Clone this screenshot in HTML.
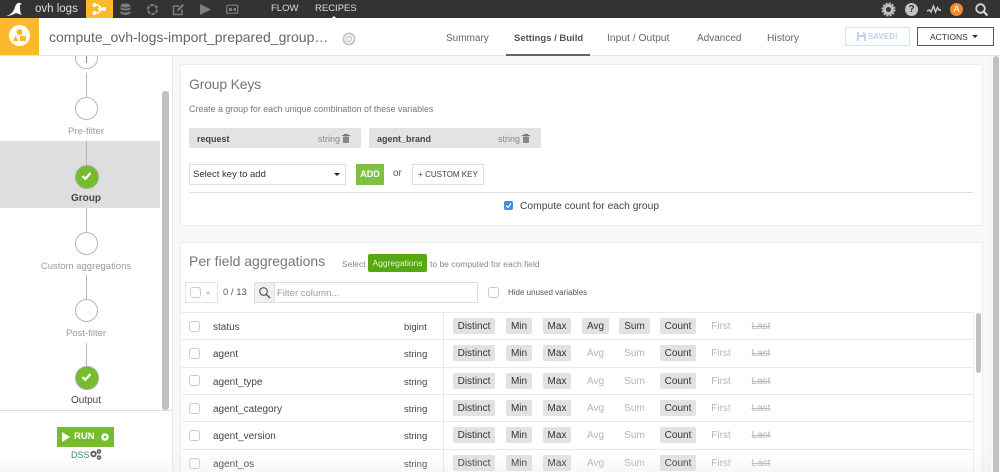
<!DOCTYPE html>
<html style="width:1000px;height:472px;overflow:hidden"><head><meta charset="utf-8">
<style>
html,body{margin:0;padding:0}
body{width:1000px;height:472px;overflow:hidden;position:relative;background:#f8f8f8;font-family:"Liberation Sans",sans-serif;color:#444}
.a{position:absolute;white-space:nowrap}
.t{position:absolute;white-space:nowrap;line-height:14px}
.circ{position:absolute;left:75px;width:21px;height:21px;border:1px solid #b5b5b5;border-radius:50%;background:#fff}
.ok{position:absolute;left:75px;width:22px;height:22px;border-radius:50%;background:#76bd2d;border:0.5px solid #aaa}
.vl{position:absolute;left:86px;width:1px;background:#b5b5b5}
.lab{position:absolute;left:0;width:172px;text-align:center;font-size:9.500px;color:#9a9a9a;line-height:12px}
.b{position:absolute;height:16px;line-height:17px;font-size:10px;background:#e2e2e2;border-radius:2px;text-align:center;color:#333}
.off{background:none;color:#b5b5b5}
.strike{text-decoration:line-through}
.cb{position:absolute;width:9px;height:9px;border:1px solid #ccc;border-radius:3px;background:#fff}
.hl{position:absolute;height:1px;background:#e9e9e9}
</style></head><body>

<!-- top bar -->
<div class="a" style="left:0;top:0;width:1000px;height:18px;background:#333"></div>
<svg class="a" style="left:5px;top:1px" width="20" height="16" viewBox="0 0 20 16"><path d="M1 15 C6 14 9 10 10 6 C11 3 13 1 15 2 L17 3 L15 4 C15 9 15 12 17 14 L11 12 C8 14 4 15 1 15Z" fill="#fff"/></svg>
<div class="t" style="left:35px;top:2px;font-size:11.500px;color:#ddd">ovh logs</div>
<div class="a" style="left:86px;top:0;width:27px;height:18px;background:#fdb92d"></div>
<svg class="a" style="left:92px;top:2px" width="15" height="14" viewBox="0 0 15 14"><path d="M2.500 3 H6 L10 7 L6 11 H2.500" fill="none" stroke="#fff" stroke-width="1.500"/><path d="M6 7H12" stroke="#fff" stroke-width="1.500"/><circle cx="2.500" cy="3" r="2" fill="#fff"/><circle cx="2.500" cy="11" r="2" fill="#fff"/><circle cx="12" cy="7" r="2" fill="#fff"/></svg>
<svg class="a" style="left:119px;top:3px" width="13" height="13" viewBox="0 0 13 13" fill="#7d7d7d"><ellipse cx="6.500" cy="2.500" rx="5" ry="2"/><path d="M1.500 4 C3 6 10 6 11.500 4 V6 C10 8 3 8 1.500 6Z"/><path d="M1.500 8 C3 10 10 10 11.500 8 V10 C10 12.500 3 12.500 1.500 10Z"/></svg>
<svg class="a" style="left:146px;top:3px" width="13" height="13" viewBox="0 0 13 13"><circle cx="6.500" cy="6.500" r="4.500" fill="none" stroke="#7d7d7d" stroke-width="2" stroke-dasharray="3.500 1.200"/></svg>
<svg class="a" style="left:172px;top:3px" width="13" height="13" viewBox="0 0 13 13"><path d="M10 6.500V11.500H1.500V3H7" fill="none" stroke="#7d7d7d" stroke-width="1.500"/><path d="M5 8.500 L5.500 6 L10.500 1 L12 2.500 L7 7.500Z" fill="#7d7d7d"/></svg>
<svg class="a" style="left:199px;top:3px" width="13" height="13" viewBox="0 0 13 13"><path d="M1 1 L12 6.500 L1 12Z" fill="#7d7d7d"/></svg>
<svg class="a" style="left:226px;top:4px" width="13" height="11" viewBox="0 0 13 11"><rect x=".7" y="1.200" width="11" height="8" rx="1" fill="none" stroke="#7d7d7d" stroke-width="1.200"/><rect x="3" y="4" width="3" height="3" fill="#7d7d7d"/><rect x="7.500" y="4" width="2.500" height="3" fill="#7d7d7d"/></svg>
<div class="t" style="left:271px;top:2px;font-size:9.500px;color:#ddd">FLOW</div>
<div class="t" style="left:315px;top:2px;font-size:9.500px;color:#ddd">RECIPES</div>
<div class="a" style="left:331px;top:16px;width:0;height:0;border-left:3px solid transparent;border-right:3px solid transparent;border-bottom:3px solid #fff"></div>

<svg class="a" style="left:881px;top:2px" width="15" height="15" viewBox="0 0 15 15"><circle cx="7.500" cy="7.500" r="4" fill="none" stroke="#bdbdbd" stroke-width="3"/><circle cx="7.500" cy="7.500" r="6" fill="none" stroke="#bdbdbd" stroke-width="2" stroke-dasharray="2 1.140"/></svg>
<div class="a" style="left:905px;top:3px;width:13px;height:13px;border-radius:50%;background:#c4c4c4;color:#333;font:bold 10px/13px 'Liberation Sans',sans-serif;text-align:center">?</div>
<svg class="a" style="left:926px;top:4px" width="16" height="11" viewBox="0 0 16 11"><path d="M1 7 L3.500 6 L5 8 L7.500 2 L9.500 8 L11.500 3.500 L13 6 L15 6" fill="none" stroke="#d0d0d0" stroke-width="1.400"/></svg>
<div class="a" style="left:950px;top:3px;width:13px;height:13px;border-radius:50%;background:#f5882a;color:#fff;font-size:9.500px;line-height:13px;text-align:center">A</div>
<svg class="a" style="left:974px;top:2px" width="15" height="15" viewBox="0 0 15 15"><circle cx="6.500" cy="6.500" r="4.300" fill="none" stroke="#d8d8d8" stroke-width="1.800"/><path d="M10 10 L13.500 13.500" stroke="#d8d8d8" stroke-width="2.200"/></svg>

<!-- header -->
<div class="a" style="left:0;top:18px;width:1000px;height:37px;background:#fff;border-bottom:1px solid #e4e4e4"></div>
<div class="a" style="left:0;top:18px;width:39px;height:37px;background:#fdb92d"></div>
<svg class="a" style="left:9px;top:25px" width="21" height="21" viewBox="0 0 21 21"><circle cx="10.500" cy="10.500" r="10.500" fill="#fff"/><circle cx="10.500" cy="7" r="3" fill="#fdb92d"/><path d="M3.500 16 L6.500 10.500 L9.500 16Z" fill="#fdb92d"/><rect x="11" y="11" width="6" height="5" fill="#fdb92d"/></svg>
<div class="t" style="left:49px;top:29px;font-size:14px;line-height:16px;color:#666">compute_ovh-logs-import_prepared_group…</div>
<svg class="a" style="left:342px;top:32px" width="14" height="14" viewBox="0 0 14 14"><circle cx="7" cy="7" r="5.500" fill="none" stroke="#c8c8c8" stroke-width="2"/><circle cx="7" cy="7" r="2.500" fill="none" stroke="#c8c8c8" stroke-width="1.500"/></svg>

<div class="t" style="left:446px;top:32px;font-size:10px;color:#666">Summary</div>
<div class="t" style="left:514px;top:32px;font-size:9.500px;color:#555;font-weight:bold">Settings / Build</div>
<div class="t" style="left:607px;top:32px;font-size:10.300px;color:#666">Input / Output</div>
<div class="t" style="left:697px;top:32px;font-size:10px;color:#666">Advanced</div>
<div class="t" style="left:767px;top:32px;font-size:10.300px;color:#666">History</div>
<div class="a" style="left:506px;top:54px;width:84px;height:2px;background:#666"></div>

<div class="a" style="left:845px;top:27px;width:63px;height:17px;border:1px solid #cfe3f7;background:#fff"></div>
<svg class="a" style="left:857px;top:32px" width="9" height="9" viewBox="0 0 9 9"><path d="M0 0H7L9 2V9H0Z" fill="#bcd6ef"/><rect x="2" y="0" width="4" height="3" fill="#fff"/><rect x="2" y="5" width="5" height="4" fill="#fff"/></svg>
<div class="t" style="left:868px;top:30px;font-size:8px;color:#b8d4ef;font-weight:bold">SAVED!</div>
<div class="a" style="left:917px;top:27px;width:75px;height:17px;border:1px solid #555;background:#fff"></div>
<div class="t" style="left:930px;top:30px;font-size:8.500px;color:#333">ACTIONS</div>
<div class="a" style="left:972px;top:35px;width:0;height:0;border-left:3.500px solid transparent;border-right:3.500px solid transparent;border-top:3.500px solid #333"></div>

<!-- sidebar -->
<div class="a" style="left:0;top:56px;width:172px;height:416px;background:#fff;border-right:1px solid #e8e8e8"></div>
<div class="a" style="left:0;top:141px;width:160px;height:67px;background:#dedede"></div>
<div class="a" style="left:162px;top:91px;width:7px;height:319px;background:#c1c1c1;border-radius:3px"></div>
<div class="a" style="left:0;top:410px;width:172px;height:1px;background:#ddd"></div>

<div class="vl" style="top:73px;height:24px"></div>
<div class="a" style="left:75px;top:56px;width:21px;height:12px;border:1px solid #b5b5b5;border-top:0;border-radius:0 0 11px 11px;background:#fff"></div>
<div class="a" style="left:86px;top:56px;width:1px;height:7px;background:#888"></div>
<div class="circ" style="top:97px"></div>
<div class="lab" style="top:126px">Pre-filter</div>
<div class="vl" style="top:141px;height:24px"></div>
<div class="ok" style="top:165px"></div>
<svg class="a" style="left:81px;top:171px" width="11" height="10" viewBox="0 0 11 10"><path d="M1.500 5 L4.300 7.800 L9.500 2" fill="none" stroke="#fff" stroke-width="2.200"/></svg>
<div class="lab" style="top:193px;color:#444;font-weight:bold;font-size:10px">Group</div>
<div class="vl" style="top:208px;height:24px"></div>
<div class="circ" style="top:232px"></div>
<div class="lab" style="top:261px">Custom aggregations</div>
<div class="vl" style="top:275px;height:24px"></div>
<div class="circ" style="top:299px"></div>
<div class="lab" style="top:328px">Post-filter</div>
<div class="vl" style="top:343px;height:23px"></div>
<div class="ok" style="top:366px"></div>
<svg class="a" style="left:81px;top:372px" width="11" height="10" viewBox="0 0 11 10"><path d="M1.500 5 L4.300 7.800 L9.500 2" fill="none" stroke="#fff" stroke-width="2.200"/></svg>
<div class="lab" style="top:395px;color:#444;font-size:10px">Output</div>

<div class="a" style="left:57px;top:427px;width:57px;height:20px;background:#76bd2d"></div>
<svg class="a" style="left:62px;top:432px" width="9" height="10" viewBox="0 0 9 10"><path d="M0 0L8 5L0 10Z" fill="#fff"/></svg>
<div class="t" style="left:74px;top:430px;font-size:9.500px;color:#fff;font-weight:bold">RUN</div>
<svg class="a" style="left:101px;top:433px" width="8" height="8" viewBox="0 0 8 8"><circle cx="4" cy="4" r="2.500" fill="none" stroke="#fff" stroke-width="2.500"/></svg>
<div class="t" style="left:71px;top:448px;font-size:9px;color:#2e8b57">DSS</div>
<svg class="a" style="left:90px;top:449px" width="12" height="11" viewBox="0 0 12 11"><circle cx="3.500" cy="5" r="2.300" fill="none" stroke="#555" stroke-width="1.800"/><circle cx="9" cy="2.500" r="1.500" fill="none" stroke="#555" stroke-width="1.500"/><circle cx="9" cy="8.500" r="1.500" fill="none" stroke="#555" stroke-width="1.500"/></svg>

<!-- Group keys card -->
<div class="a" style="left:180px;top:64px;width:801px;height:160px;background:#fff;border:1px solid #ececec"></div>
<div class="t" style="left:189px;top:76px;font-size:14px;line-height:16px;color:#777;letter-spacing:-.2px">Group Keys</div>
<div class="t" style="left:189px;top:102px;font-size:8.850px;color:#777">Create a group for each unique combination of these variables</div>

<div class="a" style="left:189px;top:128px;width:172px;height:20px;background:#e3e3e3;border-radius:1px"></div>
<div class="t" style="left:197px;top:132px;font-size:9px;font-weight:bold;color:#444">request</div>
<div class="t" style="left:318px;top:132px;font-size:9px;color:#888">string</div>
<div class="a" style="left:369px;top:128px;width:172px;height:20px;background:#e3e3e3;border-radius:1px"></div>
<div class="t" style="left:377px;top:132px;font-size:9px;font-weight:bold;color:#444">agent_brand</div>
<div class="t" style="left:498px;top:132px;font-size:9px;color:#888">string</div>
<svg class="a" style="left:342px;top:134px" width="8" height="9" viewBox="0 0 8 9"><path d="M0 1.500H8M2.500 1.500V.5H5.500V1.500" stroke="#777" fill="none"/><rect x="1" y="2.500" width="6" height="6.500" fill="#888"/></svg>
<svg class="a" style="left:522px;top:134px" width="8" height="9" viewBox="0 0 8 9"><path d="M0 1.500H8M2.500 1.500V.5H5.500V1.500" stroke="#777" fill="none"/><rect x="1" y="2.500" width="6" height="6.500" fill="#888"/></svg>

<div class="a" style="left:189px;top:164px;width:155px;height:19px;background:#fff;border:1px solid #ddd"></div>
<div class="t" style="left:193px;top:168px;font-size:9.500px;color:#333">Select key to add</div>
<div class="a" style="left:334px;top:173px;width:0;height:0;border-left:3px solid transparent;border-right:3px solid transparent;border-top:3px solid #222"></div>
<div class="a" style="left:356px;top:164px;width:28px;height:21px;background:#7fc241;color:#fff;font-size:9px;font-weight:bold;line-height:20px;text-align:center">ADD</div>
<div class="t" style="left:393px;top:167px;font-size:10px;color:#555">or</div>
<div class="a" style="left:412px;top:164px;width:70px;height:19px;background:#fff;border:1px solid #ddd;font-size:8px;line-height:20px;text-align:center;color:#444">+ CUSTOM KEY</div>
<div class="a" style="left:189px;top:192px;width:784px;height:1px;background:#ddd"></div>

<div class="a" style="left:504px;top:201px;width:9px;height:9px;background:#3b8ee8;border-radius:2px"></div>
<svg class="a" style="left:504px;top:201px" width="9" height="9" viewBox="0 0 9 9"><path d="M2 4.500 L4 6.500 L7 2.500" fill="none" stroke="#fff" stroke-width="1.200"/></svg>
<div class="t" style="left:520px;top:200px;font-size:10.300px;color:#444">Compute count for each group</div>

<!-- Per field card -->
<div class="a" style="left:180px;top:242px;width:801px;height:229px;background:#fff;border:1px solid #ececec;border-bottom:0"></div>
<div class="t" style="left:189px;top:253px;font-size:14px;line-height:16px;color:#777">Per field aggregations</div>
<div class="t" style="left:342px;top:257px;font-size:8.500px;color:#888">Select</div>
<div class="a" style="left:368px;top:254px;width:59px;height:18px;background:#55a80f;border-radius:2px;color:#e6f3d8;font-size:8.500px;line-height:18px;text-align:center">Aggregations</div>
<div class="t" style="left:430px;top:257px;font-size:8.500px;color:#888">to be computed for each field</div>

<div class="a" style="left:185px;top:282px;height:19px;background:#fff;border:1px solid #e2e2e2;width:31px"></div>
<div class="cb" style="left:190px;top:287px"></div>
<div class="a" style="left:206px;top:292px;width:0;height:0;border-left:2.500px solid transparent;border-right:2.500px solid transparent;border-top:3px solid #bbb"></div>
<div class="t" style="left:223px;top:286px;font-size:9.500px;color:#555">0 / 13</div>
<div class="a" style="left:254px;top:282px;width:222px;height:19px;background:#fff;border:1px solid #ddd"></div>
<div class="a" style="left:255px;top:283px;width:19px;height:19px;background:#f0f0f0;border-right:1px solid #ddd"></div>
<svg class="a" style="left:258px;top:286px" width="13" height="13" viewBox="0 0 13 13"><circle cx="5.500" cy="5.500" r="3.800" fill="none" stroke="#555" stroke-width="1.100"/><path d="M8.500 8.500L12 12" stroke="#555" stroke-width="1.500"/></svg>
<div class="t" style="left:277px;top:287px;font-size:9.500px;color:#999">Filter column...</div>
<div class="cb" style="left:488px;top:287px"></div>
<div class="t" style="left:508px;top:286px;font-size:8px;color:#555">Hide unused variables</div>

<!-- table -->
<div class="a" style="left:181px;top:312px;width:792px;height:160px;background:#fff;border-right:1px solid #eee"></div>
<div class="hl" style="left:181px;top:312px;width:792px"></div>
<div class="hl" style="left:181px;top:339px;width:792px"></div>
<div class="hl" style="left:181px;top:367px;width:792px"></div>
<div class="hl" style="left:181px;top:394px;width:792px"></div>
<div class="hl" style="left:181px;top:421px;width:792px"></div>
<div class="hl" style="left:181px;top:449px;width:792px"></div>
<div class="a" style="left:443px;top:312px;width:1px;height:160px;background:#e9e9e9"></div>
<div class="a" style="left:976px;top:313px;width:5px;height:60px;background:#c1c1c1;border-radius:3px"></div>

<!-- rows -->
<div class="cb" style="left:189px;top:321px"></div><div class="t" style="left:213px;top:321px;font-size:10px;color:#444">status</div><div class="t" style="left:404px;top:321px;font-size:9.500px;color:#444">bigint</div>
<div class="b" style="left:453px;top:318px;width:42px">Distinct</div><div class="b" style="left:506px;top:318px;width:26px">Min</div><div class="b" style="left:543px;top:318px;width:28px">Max</div><div class="b" style="left:582px;top:318px;width:27px">Avg</div><div class="b" style="left:619px;top:318px;width:31px">Sum</div><div class="b" style="left:660px;top:318px;width:36px">Count</div><div class="b off" style="left:704px;top:318px;width:34px">First</div><div class="b off strike" style="left:744px;top:318px;width:34px">Last</div>

<div class="cb" style="left:189px;top:348px"></div><div class="t" style="left:213px;top:348px;font-size:10px;color:#444">agent</div><div class="t" style="left:404px;top:348px;font-size:9.500px;color:#444">string</div>
<div class="b" style="left:453px;top:345px;width:42px">Distinct</div><div class="b" style="left:506px;top:345px;width:26px">Min</div><div class="b" style="left:543px;top:345px;width:28px">Max</div><div class="b off" style="left:582px;top:345px;width:27px">Avg</div><div class="b off" style="left:619px;top:345px;width:31px">Sum</div><div class="b" style="left:660px;top:345px;width:36px">Count</div><div class="b off" style="left:704px;top:345px;width:34px">First</div><div class="b off strike" style="left:744px;top:345px;width:34px">Last</div>

<div class="cb" style="left:189px;top:375px"></div><div class="t" style="left:213px;top:376px;font-size:10px;color:#444">agent_type</div><div class="t" style="left:404px;top:376px;font-size:9.500px;color:#444">string</div>
<div class="b" style="left:453px;top:373px;width:42px">Distinct</div><div class="b" style="left:506px;top:373px;width:26px">Min</div><div class="b" style="left:543px;top:373px;width:28px">Max</div><div class="b off" style="left:582px;top:373px;width:27px">Avg</div><div class="b off" style="left:619px;top:373px;width:31px">Sum</div><div class="b" style="left:660px;top:373px;width:36px">Count</div><div class="b off" style="left:704px;top:373px;width:34px">First</div><div class="b off strike" style="left:744px;top:373px;width:34px">Last</div>

<div class="cb" style="left:189px;top:403px"></div><div class="t" style="left:213px;top:403px;font-size:10px;color:#444">agent_category</div><div class="t" style="left:404px;top:403px;font-size:9.500px;color:#444">string</div>
<div class="b" style="left:453px;top:400px;width:42px">Distinct</div><div class="b" style="left:506px;top:400px;width:26px">Min</div><div class="b" style="left:543px;top:400px;width:28px">Max</div><div class="b off" style="left:582px;top:400px;width:27px">Avg</div><div class="b off" style="left:619px;top:400px;width:31px">Sum</div><div class="b" style="left:660px;top:400px;width:36px">Count</div><div class="b off" style="left:704px;top:400px;width:34px">First</div><div class="b off strike" style="left:744px;top:400px;width:34px">Last</div>

<div class="cb" style="left:189px;top:430px"></div><div class="t" style="left:213px;top:430px;font-size:10px;color:#444">agent_version</div><div class="t" style="left:404px;top:430px;font-size:9.500px;color:#444">string</div>
<div class="b" style="left:453px;top:427px;width:42px">Distinct</div><div class="b" style="left:506px;top:427px;width:26px">Min</div><div class="b" style="left:543px;top:427px;width:28px">Max</div><div class="b off" style="left:582px;top:427px;width:27px">Avg</div><div class="b off" style="left:619px;top:427px;width:31px">Sum</div><div class="b" style="left:660px;top:427px;width:36px">Count</div><div class="b off" style="left:704px;top:427px;width:34px">First</div><div class="b off strike" style="left:744px;top:427px;width:34px">Last</div>

<div class="cb" style="left:189px;top:458px"></div><div class="t" style="left:213px;top:458px;font-size:10px;color:#444">agent_os</div><div class="t" style="left:404px;top:458px;font-size:9.500px;color:#444">string</div>
<div class="b" style="left:453px;top:455px;width:42px">Distinct</div><div class="b" style="left:506px;top:455px;width:26px">Min</div><div class="b" style="left:543px;top:455px;width:28px">Max</div><div class="b off" style="left:582px;top:455px;width:27px">Avg</div><div class="b off" style="left:619px;top:455px;width:31px">Sum</div><div class="b" style="left:660px;top:455px;width:36px">Count</div><div class="b off" style="left:704px;top:455px;width:34px">First</div><div class="b off strike" style="left:744px;top:455px;width:34px">Last</div>

<!-- bottom fade -->
<div class="a" style="left:0;top:452px;width:1000px;height:20px;background:linear-gradient(rgba(240,240,240,0),rgba(225,225,225,.25))"></div>

<!-- page scrollbar (on top) -->
<div class="a" style="left:990px;top:56px;width:10px;height:416px;background:#fafafa;border-left:1px solid #eee;box-sizing:border-box;z-index:5"></div>
<div class="a" style="left:993px;top:56px;width:6px;height:416px;background:#c1c1c1;border-radius:3px 3px 0 0;z-index:6"></div>
</body></html>
